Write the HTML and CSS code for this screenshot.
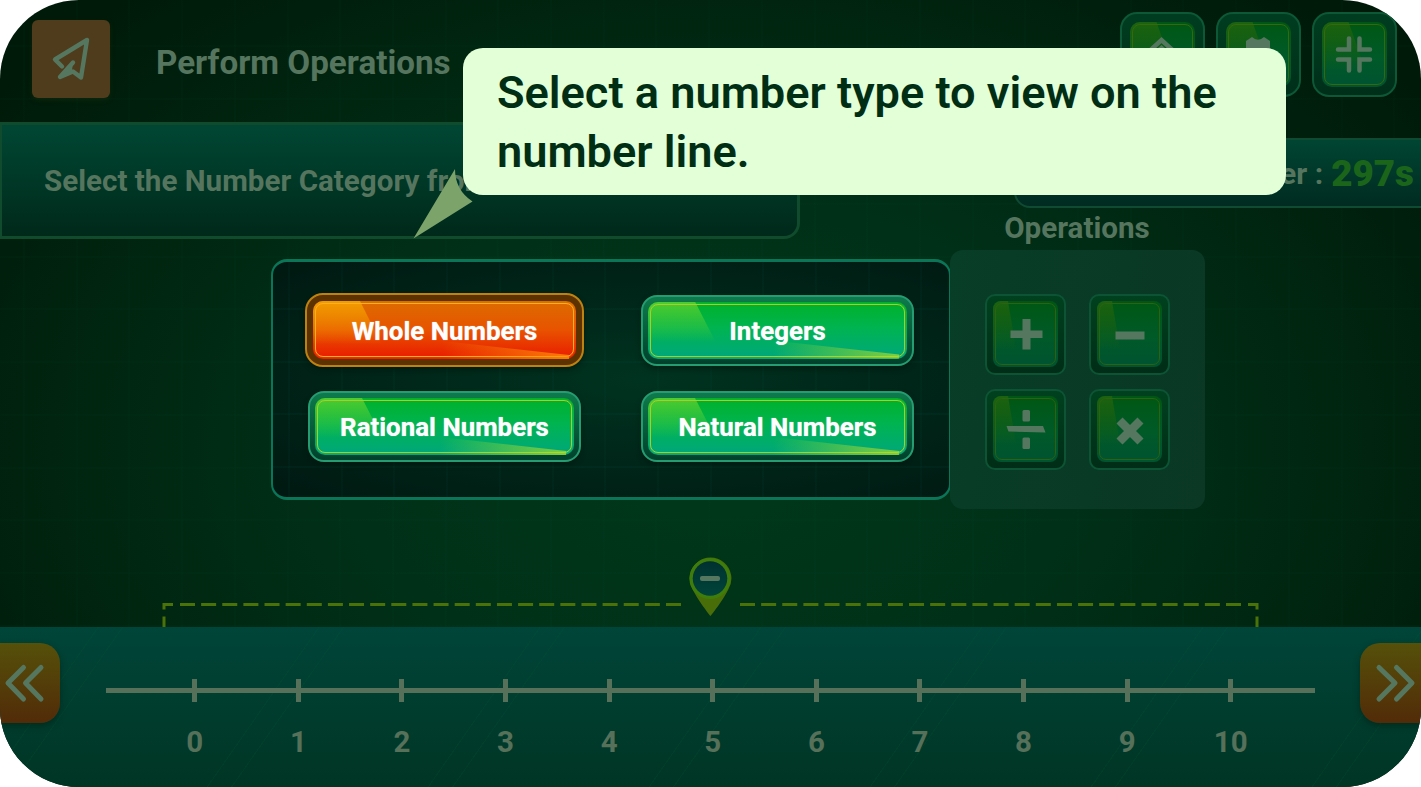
FILE: index.html
```html
<!DOCTYPE html>
<html lang="en">
<head>
<meta charset="utf-8">
<title>Perform Operations</title>
<link rel="stylesheet" href="styles.css">
</head>
<body>
<div class="screen">
  <header class="header">
    <div class="logo">
      <svg width="78" height="78" viewBox="0 0 78 78"><path d="M30 46.500 L23 39.500 L55 20 L49 57.500 L41 51.500 L28 57 L41 42.500" fill="none" stroke="#56775f" stroke-width="4.400" stroke-linejoin="round" stroke-linecap="round"/><path d="M41 43 L28 57 L40 50z" fill="#56775f"/></svg>
    </div>
    <h1 class="title">Perform Operations</h1>
    <nav class="tools">
      <button class="key tool"><span class="face"><svg width="66" height="66" viewBox="0 0 66 66"><path d="M14 36 L32.500 19 L51 36" fill="none" stroke="#56775f" stroke-width="4.500"/><path d="M20 35 L32.500 24 L45 35 V49 H20 Z" fill="#56775f"/></svg></span></button>
      <button class="key tool"><span class="face"><svg width="66" height="66" viewBox="0 0 66 66"><path d="M21 20 L27 16 Q33 21.500 39 16 L45 20 V27 L51 33 L45 39 L39 50 H27 L21 39 L15 33 L21 27 Z" fill="#56775f"/></svg></span></button>
      <button class="key tool"><span class="face"><svg width="66" height="66" viewBox="0 0 66 66"><path d="M28 17.500 V28.500 H17 M38.500 17.500 V28.500 H49 M28 49.500 V38.500 H17 M38.500 49.500 V38.500 H49" fill="none" stroke="#56775f" stroke-width="4.500" stroke-linecap="round"/></svg></span></button>
    </nav>
  </header>

  <section class="status">
    <div class="prompt">Select the Number Category from the</div>
    <div class="timer">Timer : <b>297s</b></div>
  </section>

  <main class="board">
    <div class="panel">
      <button class="key choice selected"><span class="face">Whole Numbers</span></button>
      <button class="key choice"><span class="face">Integers</span></button>
      <button class="key choice"><span class="face">Rational Numbers</span></button>
      <button class="key choice"><span class="face">Natural Numbers</span></button>
    </div>
    <div class="operations">
      <h2 class="ops-title">Operations</h2>
      <div class="ops">
        <button class="key op"><span class="face"><svg width="66" height="66" viewBox="0 0 66 66"><path d="M29.500 18 h8 v11.500 h12 v7.500 h-12 v11.500 h-8 v-11.500 h-12 v-7.500 h12z" fill="#56775f"/></svg></span></button>
        <button class="key op"><span class="face"><svg width="66" height="66" viewBox="0 0 66 66"><path d="M18.500 30.500 h29 v8 h-29z" fill="#56775f"/></svg></span></button>
        <button class="key op"><span class="face"><svg width="66" height="66" viewBox="0 0 66 66"><path d="M13.500 30 H50 L52.500 36.500 L15.500 35.500z" fill="#56775f"/><rect x="29.500" y="14" width="7.500" height="11.500" rx="1.500" fill="#56775f"/><rect x="29.500" y="41.500" width="7.500" height="11.500" rx="1.500" fill="#56775f"/></svg></span></button>
        <button class="key op"><span class="face"><svg width="66" height="66" viewBox="0 0 66 66"><path d="M22.500 24.500 L43.500 45.500 M43.500 24.500 L22.500 45.500" stroke="#56775f" stroke-width="8.500"/></svg></span></button>
      </div>
    </div>
  </main>

  <section class="range">
    <svg width="1421" height="72" viewBox="0 0 1421 72">
      <defs><linearGradient id="lens" x1="0" y1="0" x2="0" y2="1"><stop offset="0" stop-color="#003130"/><stop offset="1" stop-color="#00443b"/></linearGradient></defs>
      <g fill="none" stroke="#4b7209" stroke-width="3">
        <path d="M164 54.500 V49.500 H173"/>
        <path d="M180 49.500 H682" stroke-dasharray="15 6.130"/>
        <path d="M740 49.500 H1244" stroke-dasharray="15 6.130"/>
        <path d="M1248 49.500 H1257 V54.500 M164 61.500 V72 M1257 61.500 V72"/>
      </g>
      <path d="M710.500 61 C707 57 696 42 692.500 34 A20.900 20.900 0 1 1 728.500 34 C725 42 714 57 710.500 61Z" fill="#496d08"/>
      <circle cx="710" cy="23.500" r="18.800" fill="none" stroke="#3f7d0a" stroke-width="3.500"/>
      <circle cx="710" cy="23.500" r="17.300" fill="url(#lens)"/>
      <rect x="700" y="21" width="20" height="5" rx="2" fill="#56775f"/>
    </svg>
  </section>

  <footer class="line-bar">
    <button class="step left"><svg width="60" height="80" viewBox="0 0 60 80"><path d="M23.500 24.500 L8 40 L23.500 56 M41 24.500 L25.500 40 L41 56" fill="none" stroke="#56775f" stroke-width="5" stroke-linecap="round" stroke-linejoin="round"/></svg></button>
    <div class="number-line">
      <div class="axis"></div>
      <ol class="ticks"><li>0</li><li>1</li><li>2</li><li>3</li><li>4</li><li>5</li><li>6</li><li>7</li><li>8</li><li>9</li><li>10</li></ol>
    </div>
    <button class="step right"><svg width="61" height="80" viewBox="0 0 61 80"><path d="M19 24.500 L35 40 L19 56 M36.500 24.500 L52 40 L36.500 56" fill="none" stroke="#56775f" stroke-width="5" stroke-linecap="round" stroke-linejoin="round"/></svg></button>
  </footer>

  <div class="tip">Select a number type to view on the number line.</div>
  <svg class="tip-tail" width="60" height="71" viewBox="0 0 60 71"><path d="M0.500 70.500 L42 1 Q42 22 59.500 33.500 Z" fill="#7ba36a"/></svg>
</div>
</body>
</html>
```
FILE: styles.css
```css
* { box-sizing: border-box; }
body { margin: 0; background: #fff; font-family: Roboto, "Liberation Sans", sans-serif; }
h1, h2, ol { margin: 0; padding: 0; }
button { border: 0; padding: 0; background: none; font: inherit; }
svg { display: block; }

.screen {
  position: relative;
  width: 1421px;
  height: 787px;
  overflow: hidden;
  border-radius: 79px;
  display: flex;
  flex-direction: column;
  color: #56755e;
  background:
    repeating-linear-gradient(90deg, transparent 0 23px, rgba(0,90,65,.04) 23px 25px, transparent 25px 52.7px),
    repeating-linear-gradient(180deg, transparent 0 45px, rgba(0,90,65,.04) 45px 47px, transparent 47px 52.7px),
    radial-gradient(ellipse 880px 600px at 50% 57%, #00381a 0%, #003118 40%, #00240f 75%, #001a09 100%);
}

.header { height: 122px; flex: none; display: flex; align-items: flex-start; padding: 12px 24px 0 32px; }
.logo { width: 78px; height: 78px; margin-top: 8px; border-radius: 6px; background: #4f3c1c; box-shadow: 0 2px 5px rgba(30,50,15,.4); }
.title { margin: 31px auto 0 46px; font-size: 33.2px; line-height: 40px; font-weight: 700; white-space: nowrap; }
.tools { display: flex; gap: 11px; margin-right: 0.500px; }

.key {
  position: relative;
  display: flex;
  padding: 5px;
  border: 2px solid #259c72;
  border-radius: 16px;
  background: linear-gradient(#0e7b4b, #00402c);
}
.face {
  position: relative;
  z-index: 0;
  flex: 1;
  display: flex;
  align-items: center;
  justify-content: center;
  overflow: hidden;
  border-radius: 10px;
  background: linear-gradient(#00b128 0%, #00b450 45%, #00a878 95%);
}
.face::before {
  content: "";
  position: absolute;
  z-index: -1;
  inset: 0;
  background: linear-gradient(rgba(110,215,50,.7), rgba(50,200,90,0) 70%);
  clip-path: polygon(0 0, 47px 0, 76px 100%, 0 100%);
}
.face::after {
  content: "";
  position: absolute;
  z-index: -1;
  inset: 2px;
  border: 1px solid #a5d02c;
  border-radius: 8px;
  box-shadow: 0 0 1px #8fce2c;
}
.face > svg { flex: none; }

.tool { width: 85px; height: 85px; padding: 8px; border-color: #0d5836; border-radius: 17px; background: linear-gradient(#003d20, #002f19); }
.tool .face, .op .face { background: linear-gradient(#005713, #005a28 55%, #00542f 90%); }
.tool .face::before { background: linear-gradient(#1d620f, transparent 75%); clip-path: polygon(0 0, 27px 0, 50px 100%, 0 100%); }
.tool .face::after { border: 1px solid #35690e; box-shadow: none; }
.tool svg { margin-top: -2px; }

.status { height: 116px; flex: none; display: flex; align-items: flex-start; justify-content: space-between; }
.prompt {
  width: 800px;
  height: 117px;
  padding-left: 42px;
  border: 3px solid #0f4b2c;
  border-left-width: 2px;
  border-radius: 0 0 16px 0;
  background: linear-gradient(#004733, #00291a);
  font-size: 29.6px;
  line-height: 112px;
  font-weight: 700;
  white-space: nowrap;
}
.timer {
  width: 423px;
  height: 70px;
  margin: 16px -16px 0 0;
  padding-right: 21px;
  border: 2px solid #0f4b33;
  border-radius: 0 0 0 16px;
  background: linear-gradient(#004532, #002b20);
  display: flex;
  align-items: center;
  justify-content: flex-end;
  gap: 8px;
  font-size: 30px;
  font-weight: 700;
}
.timer b { font-size: 36.800px; color: #1b651b; }

.board { height: 271px; flex: none; display: flex; align-items: flex-start; padding-left: 271px; }
.panel {
  width: 680px;
  height: 241px;
  margin: 21px -1px 0 0;
  padding: 31px 34px 0 32px;
  border: 3px solid #0b7558;
  border-width: 3px 2px;
  border-radius: 16px;
  background:
    repeating-linear-gradient(90deg, transparent 0 15px, rgba(0,110,85,.06) 15px 17px, transparent 17px 52.7px),
    repeating-linear-gradient(180deg, transparent 0 46px, rgba(0,110,85,.08) 46px 48px, transparent 48px 52.7px),
    radial-gradient(ellipse at 55% 50%, #003320, #002217 65%, #001811 100%);
  display: grid;
  grid-template-columns: 279px 273px;
  grid-template-rows: 74px 71px;
  gap: 24px 57px;
  align-content: start;
  justify-items: center;
  align-items: center;
}
.choice { width: 273px; height: 71px; font-size: 25.9px; font-weight: 700; color: #fff; box-shadow: 0 3px 5px rgba(0,20,12,.5); }
.choice .face { text-shadow: 0 0 1px rgba(255,255,255,.7); padding-top: 1px; }
.choice::after {
  content: "";
  position: absolute;
  right: 9px;
  bottom: 5px;
  width: 130px;
  height: 18px;
  background: linear-gradient(90deg, transparent, rgba(175,220,40,.75));
  clip-path: polygon(0 0, 97% 78%, 97% 100%, 0 100%);
}
.selected { width: 279px; height: 74px; padding: 6px; border: 2px solid #bf8110; border-radius: 18px; background: #5b3200; }
.selected > .face { background: linear-gradient(#dc6c00 0%, #e85300 50%, #e92300 92%); }
.selected .face::before { background: linear-gradient(#f39b00, rgba(238,100,0,0) 75%); }
.selected .face::after { border-color: #fbb020; box-shadow: 0 0 1px #f89a18; }
.selected::after { bottom: 6px; background: linear-gradient(90deg, transparent, rgba(255,150,10,.8)); }

.operations { width: 255px; margin-top: -25px; }
.ops-title { width: 254px; height: 37px; font-size: 29.6px; line-height: 30px; font-weight: 700; text-align: center; }
.ops {
  height: 259px;
  padding: 44px 35px 0;
  border-radius: 13px;
  background: linear-gradient(100deg, #083d27, #0a3825);
  display: grid;
  grid-template-columns: 81px 81px;
  grid-auto-rows: 81px;
  gap: 14px 23px;
}
.op { border: 2px solid #0c5434; border-radius: 10px; background: linear-gradient(#00411f, #002d17); padding: 5px 6px 6px; }
.op .face { border-radius: 8px; }
.op .face::before { background: linear-gradient(#1d620f, transparent 75%); clip-path: polygon(0 0, 15px 0, 26px 100%, 0 100%); }
.op .face::after { border: 1px solid #2c6212; border-radius: 7px; box-shadow: none; }
.op svg { margin-top: -1px; }

.range { height: 118px; flex: none; padding-top: 46px; overflow: hidden; }

.line-bar {
  height: 160px;
  flex: none;
  display: flex;
  align-items: flex-start;
  padding-top: 16px;
  background:
    repeating-linear-gradient(125deg, transparent 0 80px, rgba(0,90,50,.18) 80px 81px, transparent 81px 100px, rgba(0,90,50,.18) 100px 101px, transparent 101px 181px),
    linear-gradient(#004539, #003524);
}
.step { width: 60px; height: 80px; background: linear-gradient(#55500a, #522b08); box-shadow: 0 3px 6px rgba(0,30,18,.5); overflow: hidden; }
.left { border-radius: 0 20px 20px 0; }
.right { width: 61px; border-radius: 20px 0 0 20px; }
.number-line { flex: 1; padding: 45px 45px 0 46px; }
.axis { height: 5px; background: #56705a; }
.ticks { list-style: none; display: flex; width: 1140px; margin: -14px 0 0 37px; }
.ticks li { width: 103.600px; flex: none; text-align: center; font-size: 29.500px; line-height: 32px; font-weight: 700; color: #56705a; }
.ticks li::before { content: ""; display: block; width: 5px; height: 23px; margin: 0 auto 24px; background: #56705a; }

.tip {
  position: absolute;
  z-index: 2;
  left: 463px;
  top: 48px;
  width: 823px;
  height: 147px;
  padding: 15px 34px;
  border-radius: 20px;
  background: #e2ffd8;
  color: #002e14;
  font-size: 45.15px;
  line-height: 59px;
  font-weight: 600;
}
.tip-tail { position: absolute; z-index: 2; left: 413px; top: 168px; }
```
